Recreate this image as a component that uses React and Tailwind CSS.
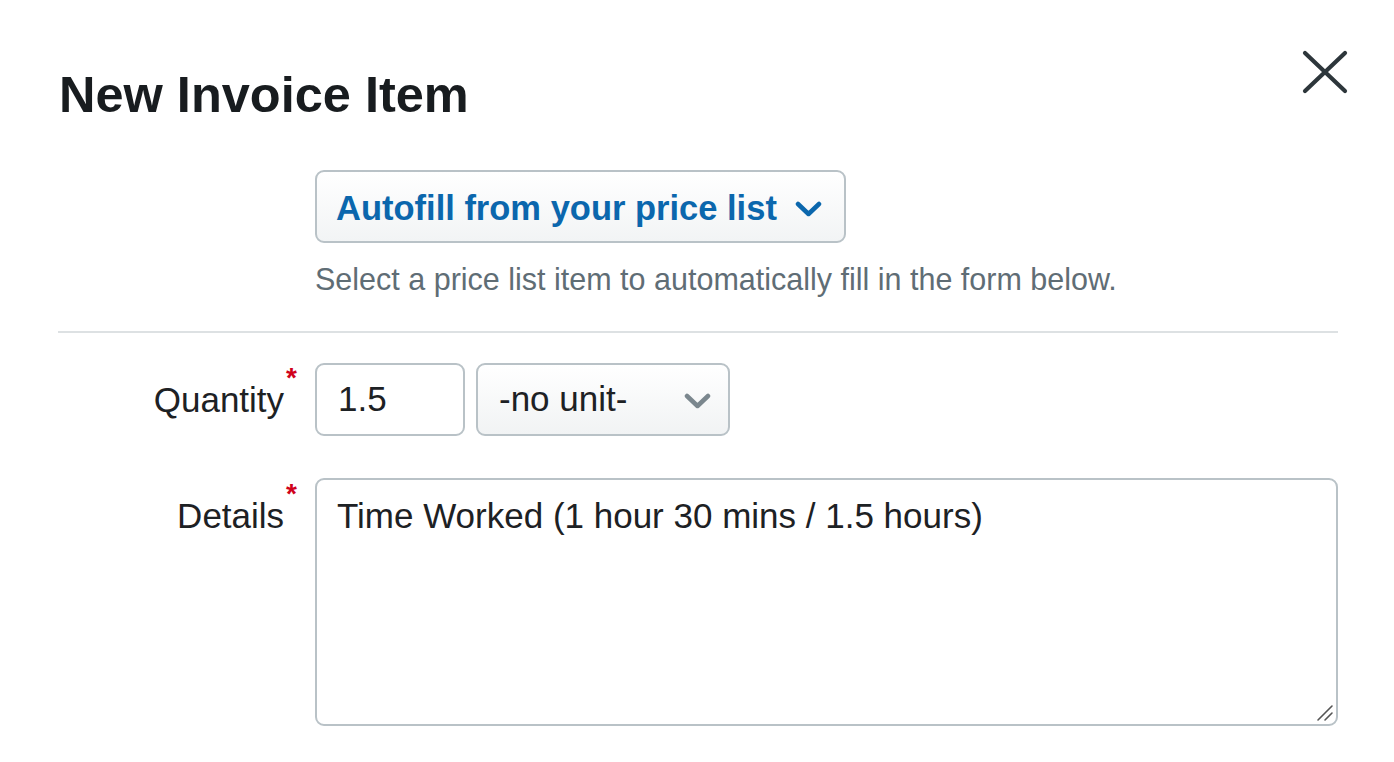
import React from 'react'

function Chevron({ className, color }) {
  return (
    <svg className={className} width="27" height="16" viewBox="0 0 27 16" fill="none">
      <path d="M3 3 L13.5 13 L24 3" stroke={color} strokeWidth="4.5" strokeLinecap="round" strokeLinejoin="round" />
    </svg>
  )
}

function Required() {
  return <span className="ml-[2px] -mt-[16px] text-[28px] font-bold leading-none text-[#d0021b]">*</span>
}

export default function App() {
  return (
    <div className="w-[1394px] h-[762px] bg-white pl-[58px] pr-[56px] font-['Liberation_Sans',Arial,sans-serif] text-[#1d2124]">
      {/* Header */}
      <div className="flex items-start justify-between pt-[49px] -mr-[11px]">
        <h1 className="mt-[21px] ml-[1px] text-[50.5px] font-bold leading-[50px] text-[#181c1f]">New Invoice Item</h1>
        <button className="block">
          <svg width="48" height="46" viewBox="0 0 48 46" fill="none">
            <path d="M4 4 L44 42 M44 4 L4 42" stroke="#2d363b" strokeWidth="4.2" strokeLinecap="round" />
          </svg>
        </button>
      </div>

      {/* Autofill */}
      <div className="pl-[257px] mt-[50px]">
        <button className="flex h-[73px] items-center rounded-[9px] border-2 border-[#b9c2c7] bg-gradient-to-b from-white to-[#f2f4f5] pl-[19px] pr-[22px]">
          <span className="mt-[4px] text-[34.5px] font-bold leading-none text-[#0b67ad]">Autofill from your price list</span>
          <Chevron className="ml-[18px] mt-[4px]" color="#0b67ad" />
        </button>
        <p className="mt-[18px] text-[30.5px] leading-[36px] text-[#5f6d75]">
          Select a price list item to automatically fill in the form below.
        </p>
      </div>

      <div className="mt-[34px] h-[2px] bg-[#dde1e3]" />

      {/* Quantity */}
      <div className="mt-[30px] flex items-center">
        <div className="flex w-[257px] items-start justify-end pr-[18px]">
          <span className="text-[35px] leading-[40px]">Quantity</span>
          <Required />
        </div>
        <div className="flex h-[73px] w-[150px] items-center rounded-[9px] border-2 border-[#b9c2c7] bg-white pl-[21px] text-[35px]">
          1.5
        </div>
        <div className="ml-[11px] flex h-[73px] w-[254px] items-center justify-between rounded-[9px] border-2 border-[#b9c2c7] bg-gradient-to-b from-white to-[#f1f3f4] pl-[21px] pr-[17px] text-[35px]">
          <span>-no unit-</span>
          <Chevron className="mt-[2px]" color="#7b878e" />
        </div>
      </div>

      {/* Details */}
      <div className="mt-[42px] flex items-start">
        <div className="flex w-[257px] items-start justify-end pr-[18px] pt-[18px]">
          <span className="text-[35px] leading-[40px]">Details</span>
          <Required />
        </div>
        <div className="relative flex-1">
          <textarea
            readOnly
            defaultValue="Time Worked (1 hour 30 mins / 1.5 hours)"
            className="block h-[248px] w-full resize-none rounded-[9px] border-2 border-[#b9c2c7] bg-white pl-[20px] pr-[20px] pt-[16px] text-[35px] leading-[40px] text-[#1d2124] outline-none"
          />
          <svg className="absolute bottom-[4px] right-[4px]" width="18" height="18" viewBox="0 0 18 18" fill="none">
            <path d="M2 16 L16 2 M9 16 L16 9" stroke="#555" strokeWidth="1.6" strokeLinecap="round" />
          </svg>
        </div>
      </div>
    </div>
  )
}
